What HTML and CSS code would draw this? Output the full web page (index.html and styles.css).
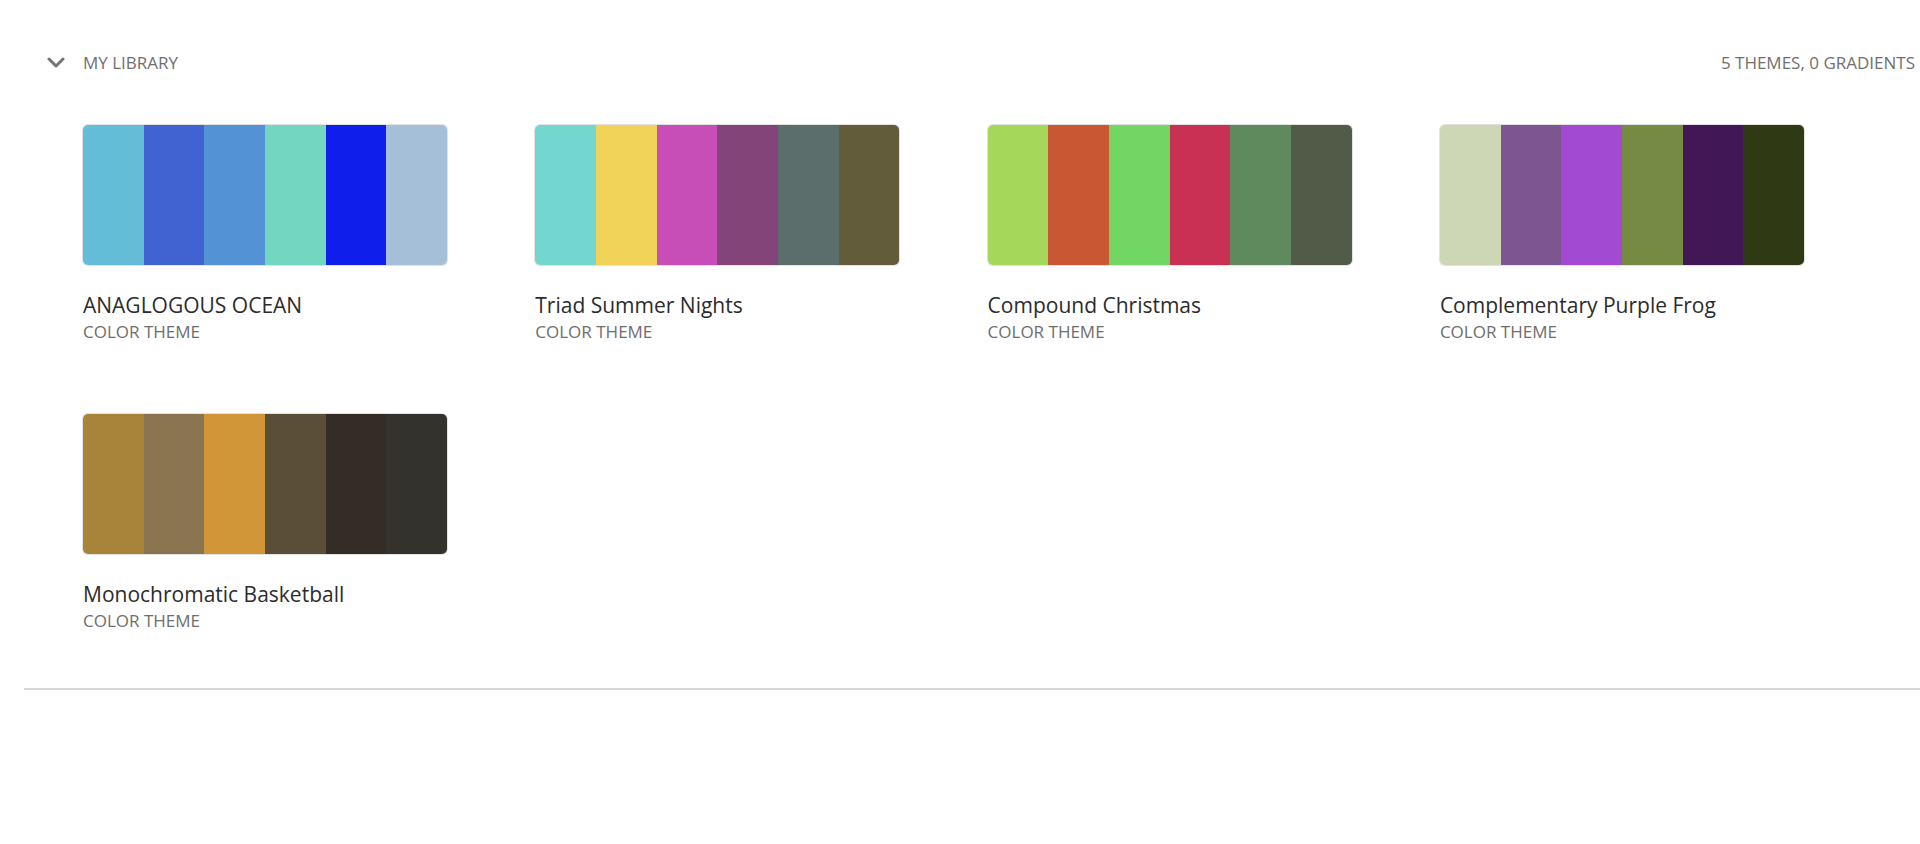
FILE: index.html
```html
<!DOCTYPE html>
<html>
<head>
<meta charset="utf-8">
<link rel="stylesheet" href="styles.css">
</head>
<body>
<section class="library">
  <header class="lib-header">
    <div class="lib-title">
      <svg class="chevron" width="18" height="11" viewBox="0 0 18 11"><path d="M2 2 L9 9 L16 2" fill="none" stroke="#767676" stroke-width="3" stroke-linecap="round" stroke-linejoin="round"/></svg>
      <span>MY LIBRARY</span>
    </div>
    <div class="lib-count">5 THEMES, 0 GRADIENTS</div>
  </header>
  <div class="grid">
    <div class="card">
      <div class="swatch">
        <span style="background:#64bdd7"></span><span style="background:#4163d1"></span><span style="background:#5392d4"></span><span style="background:#72d6c1"></span><span style="background:#0f1eea"></span><span style="background:#a6bfd9"></span>
      </div>
      <div class="name">ANAGLOGOUS OCEAN</div>
      <div class="type">COLOR THEME</div>
    </div>
    <div class="card">
      <div class="swatch">
        <span style="background:#73d7d0"></span><span style="background:#f2d35a"></span><span style="background:#c74eb6"></span><span style="background:#834479"></span><span style="background:#5c6e6c"></span><span style="background:#625c3b"></span>
      </div>
      <div class="name">Triad Summer Nights</div>
      <div class="type">COLOR THEME</div>
    </div>
    <div class="card">
      <div class="swatch">
        <span style="background:#a5d75a"></span><span style="background:#c95734"></span><span style="background:#72d664"></span><span style="background:#c83154"></span><span style="background:#5e8a5d"></span><span style="background:#525a48"></span>
      </div>
      <div class="name">Compound Christmas</div>
      <div class="type">COLOR THEME</div>
    </div>
    <div class="card">
      <div class="swatch">
        <span style="background:#cdd6b5"></span><span style="background:#7c5591"></span><span style="background:#a24ad2"></span><span style="background:#778a43"></span><span style="background:#421755"></span><span style="background:#2f3a15"></span>
      </div>
      <div class="name">Complementary Purple Frog</div>
      <div class="type">COLOR THEME</div>
    </div>
    <div class="card">
      <div class="swatch">
        <span style="background:#a8833a"></span><span style="background:#8b7550"></span><span style="background:#d19638"></span><span style="background:#5b4e38"></span><span style="background:#342d27"></span><span style="background:#33322d"></span>
      </div>
      <div class="name">Monochromatic Basketball</div>
      <div class="type">COLOR THEME</div>
    </div>
  </div>
</section>
<hr class="divider">
</body>
</html>
```
FILE: styles.css
```css
html, body { margin: 0; padding: 0; background: #fff; }
body { font-family: "Open Sans", "Noto Sans", sans-serif; color: #2c2c2c; width: 1920px; }
.library { padding: 46px 0 0 0; }
.lib-header { display: flex; justify-content: space-between; align-items: center; height: 32px; padding-right: 5px; }
.lib-title { display: flex; align-items: center; gap: 18px; padding-left: 47px; }
.chevron { display: block; }
.lib-title span, .lib-count { font-size: 17px; color: #6f6f6f; }
.grid { display: grid; grid-template-columns: repeat(4, 364px); column-gap: 88.3px; row-gap: 69px; padding: 47px 0 0 83px; }
.swatch { display: flex; height: 140px; border-radius: 5px; overflow: hidden; box-shadow: 0 0 0 1px #e2e2e2; }
.swatch span { flex: 1; }
.name { margin-top: 26px; font-size: 21px; line-height: 28px; color: #2c2c2c; }
.type { font-size: 17px; line-height: 26px; color: #6e6e6e; }
.divider { margin: 54px 0 0 24px; border: 0; height: 2px; background: #d6d6d6; }
```
